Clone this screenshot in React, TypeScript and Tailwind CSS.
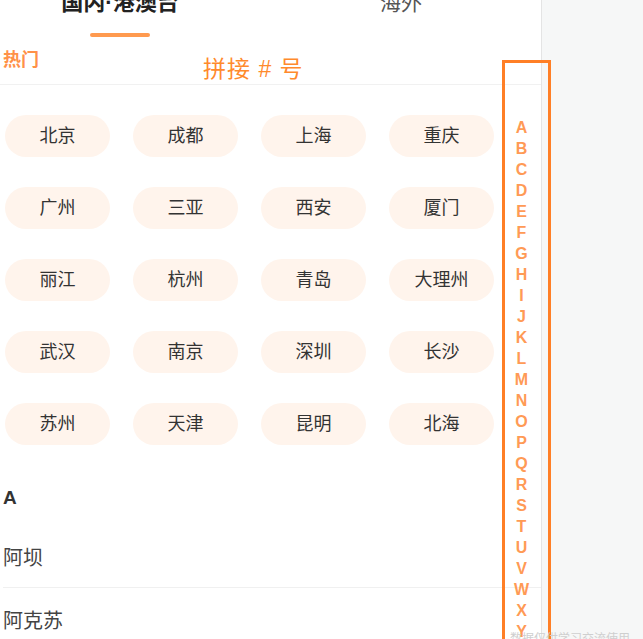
import React from 'react';

const hotCities = [
  '北京', '成都', '上海', '重庆',
  '广州', '三亚', '西安', '厦门',
  '丽江', '杭州', '青岛', '大理州',
  '武汉', '南京', '深圳', '长沙',
  '苏州', '天津', '昆明', '北海',
];

const letters = 'ABCDEFGHIJKLMNOPQRSTUVWXY'.split('');

const cjk = { fontFamily: '"Liberation Sans", "Noto Sans CJK SC", sans-serif' };

export default function App() {
  return (
    <div className="relative w-full h-[639px] overflow-hidden bg-[#f6f7f7]" style={cjk}>
      <div className="flow-root w-[542px] h-full bg-white border-r border-[#e4e4e4] overflow-hidden">
        {/* tabs */}
        <div className="flex h-[49px] -mt-[10px]">
          <div className="w-[240px] shrink-0 flex flex-col items-center">
            <span className="text-[22px] leading-[26px] font-bold text-[#222]">国内·港澳台</span>
            <span className="block mt-[17px] w-[60px] h-[4px] rounded-full bg-[#ff9a4f]" />
          </div>
          <div className="w-[322px] shrink-0 flex justify-center">
            <span className="text-[21px] leading-[26px] text-[#555]">海外</span>
          </div>
        </div>

        {/* hot header */}
        <div className="flex items-start h-[46px] border-b border-[#f1f1f1]">
          <span className="ml-[3px] mt-[8px] text-[18px] leading-[26px] font-bold text-[#ff9148]">热门</span>
          <span className="ml-[164px] mt-[17px] text-[23px] leading-[26px] tracking-[1px] text-[#ff8a2c] whitespace-pre">
            拼接 # 号
          </span>
        </div>

        {/* hot cities */}
        <div className="grid grid-cols-[105px_105px_105px_105px] gap-x-[23px] gap-y-[30px] pl-[5px] pt-[30px]">
          {hotCities.map((c) => (
            <div
              key={c}
              className="h-[42px] rounded-full bg-[#fff4ec] flex items-center justify-center text-[18px] text-[#333]"
            >
              {c}
            </div>
          ))}
        </div>

        {/* letter section */}
        <div className="pl-[3px] pt-[40px]">
          <div className="text-[19px] leading-[26px] font-bold text-[#333]">A</div>
        </div>
        <div className="ml-[3px] mt-[18px] h-[59px] flex items-center border-b border-[#f0f0f0] text-[20px] text-[#444]">
          阿坝
        </div>
        <div className="ml-[3px] h-[66px] flex items-center text-[20px] text-[#444]">阿克苏</div>
      </div>

      {/* letter index */}
      <div className="absolute left-[502px] top-[60px] w-[49px] h-[600px] border-[3px] border-[#ff7f26]">
        <div className="w-[33px] pt-[54px] flex flex-col items-center">
          {letters.map((l) => (
            <span
              key={l}
              className="h-[21px] leading-[21px] text-[16px] font-bold text-[#ff9a55]"
              style={{ fontFamily: '"Liberation Sans", Arial, sans-serif' }}
            >
              {l}
            </span>
          ))}
        </div>
      </div>

      <div className="absolute left-[506px] top-[632px] text-[12px] leading-[14px] text-[#cfcfcf] whitespace-nowrap">
        ·数据仅供学习交流使用
      </div>
    </div>
  );
}
